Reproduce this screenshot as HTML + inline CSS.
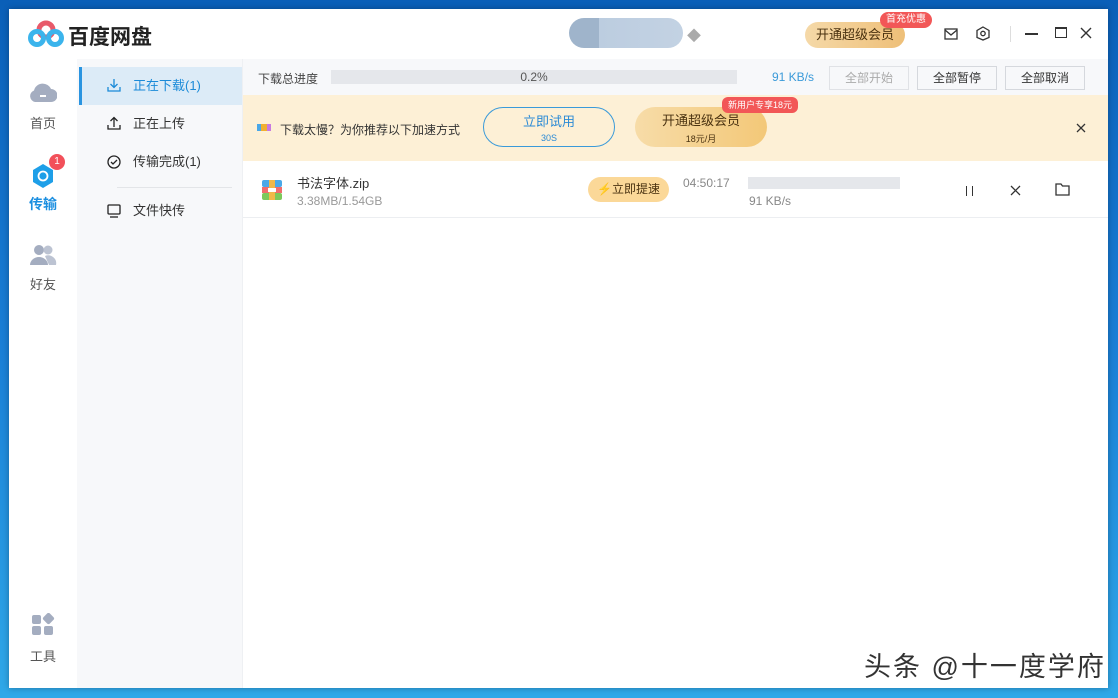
<!DOCTYPE html><html><head><meta charset="utf-8"><style>
*{margin:0;padding:0;box-sizing:border-box}
body{width:1118px;height:698px;overflow:hidden;font-family:"Liberation Sans","Noto Sans CJK SC",sans-serif;background:linear-gradient(180deg,#0a5fb8 0%,#1a7fd6 50%,#2fa8e8 100%);position:relative;font-size:12px;color:#333}
.win{position:absolute;left:9px;top:9px;width:1099px;height:679px;background:#fff;box-shadow:0 0 6px rgba(0,0,0,.3)}
.abs{position:absolute}
.side{left:0;top:50px;width:68px;height:629px;background:#fff}
.list{left:68px;top:50px;width:166px;height:629px;background:#f7f8fa;border-right:1px solid #eef0f3}
.main{left:234px;top:50px;width:865px;height:629px;background:#fff}
.nav{position:absolute;left:0;width:68px;text-align:center;font-size:13px;color:#555}
.li{position:absolute;left:2px;width:163px;height:38px;line-height:38px;padding-left:54px;font-size:13px;color:#333}
.btn{position:absolute;top:7px;height:24px;border:1px solid #d5d8dd;background:#f7f8fa;font-size:12px;text-align:center;line-height:22px;color:#333;width:80px}
.tag{position:absolute;background:#f25757;color:#fff;font-size:10px;border-radius:8px;height:16px;line-height:16px;padding:0 6px}
</style></head><body>
<div class="win">
 <svg class="abs" style="left:19px;top:11px" width="36" height="28" viewBox="0 0 36 28"><circle cx="18" cy="10" r="7" fill="none" stroke="#e85a6a" stroke-width="5"/><circle cx="9" cy="18" r="6.5" fill="none" stroke="#3bb4ec" stroke-width="5"/><circle cx="27" cy="18" r="6.5" fill="none" stroke="#3bb4ec" stroke-width="5"/></svg>
 <div class="abs" style="left:59px;top:12px;font-size:21px;font-weight:bold;color:#222">百度网盘</div>
 <div class="abs" style="left:560px;top:9px;width:114px;height:30px;border-radius:15px;background:linear-gradient(90deg,#9fb4cb 0,#9fb4cb 30px,#bccde0 30px,#c3d2e3 100%)"></div>
 <div class="abs" style="left:678px;top:17px;color:#aaa;font-size:14px">◆</div>
 <div class="abs" style="left:796px;top:13px;width:100px;height:26px;border-radius:13px;background:linear-gradient(90deg,#f5d9a8,#eebf78);text-align:center;line-height:26px;font-size:13px;color:#4a3210">开通超级会员</div>
 <div class="tag" style="left:871px;top:3px">首充优惠</div>
 <svg class="abs" style="left:935px;top:19px" width="14" height="12"><rect x="1" y="1" width="12" height="10" fill="none" stroke="#333" stroke-width="1.3"/><path d="M1 2l6 5 6-5" fill="none" stroke="#333" stroke-width="1.3"/></svg>
 <svg class="abs" style="left:967px;top:17px" width="14" height="15"><path d="M7 1l6 3.5v7L7 14 1 11.5v-7z" fill="none" stroke="#333" stroke-width="1.3"/><circle cx="7" cy="7.5" r="2.2" fill="none" stroke="#333" stroke-width="1.3"/></svg>
 <div class="abs" style="left:1001px;top:17px;width:1px;height:16px;background:#ddd"></div>
 <div class="abs" style="left:1016px;top:24px;width:13px;height:1.5px;background:#333"></div>
 <div class="abs" style="left:1046px;top:18px;width:12px;height:11px;border:1.5px solid #333;border-top-width:2.5px"></div>
 <svg class="abs" style="left:1071px;top:18px" width="12" height="12"><path d="M1 1l10 10M11 1L1 11" stroke="#333" stroke-width="1.4"/></svg>

 <div class="abs side">
  <div class="nav" style="top:22px"><svg width="28" height="22" viewBox="0 0 28 22"><path d="M6 21a6 6 0 0 1-1-11.5A9 9 0 0 1 22 8a6.5 6.5 0 0 1 0 13z" fill="#a4adc0"/><rect x="11" y="14" width="6" height="2" fill="#fff"/></svg><div style="margin-top:7px">首页</div></div>
  <div class="nav" style="top:103px"><svg width="28" height="28" viewBox="0 0 28 28"><path d="M14 2l10 6v12l-10 6-10-6V8z" fill="#1e9fe8"/><circle cx="14" cy="14" r="4.5" fill="none" stroke="#fff" stroke-width="1.8"/></svg><div style="margin-top:1px;color:#1c8fe0;font-weight:bold;font-size:14px">传输</div></div>
  <div class="abs" style="left:40px;top:95px;width:16px;height:16px;border-radius:8px;background:#f2505a;color:#fff;font-size:10px;text-align:center;line-height:16px">1</div>
  <div class="nav" style="top:184px"><svg width="28" height="24" viewBox="0 0 28 24"><circle cx="10" cy="7" r="5" fill="#a4adc0"/><path d="M1 22a9 8 0 0 1 18 0z" fill="#a4adc0"/><circle cx="19" cy="7" r="4.5" fill="#bcc3d2"/><path d="M16 13a8 8 0 0 1 11 9h-7z" fill="#bcc3d2"/></svg><div style="margin-top:4px">好友</div></div>
  <div class="nav" style="top:554px"><svg width="24" height="24" viewBox="0 0 24 24"><rect x="1" y="2" width="9" height="9" rx="2" fill="#a4adc0"/><rect x="13" y="1" width="9" height="9" rx="2" fill="#a4adc0" transform="rotate(45 17.5 5.5)"/><rect x="1" y="13" width="9" height="9" rx="2" fill="#a4adc0"/><rect x="13" y="13" width="9" height="9" rx="2" fill="#a4adc0"/></svg><div style="margin-top:6px">工具</div></div>
 </div>

 <div class="abs list">
  <div class="li" style="top:8px;background:#dcebf7;color:#1a8ad8;border-left:3px solid #2a94e0;padding-left:51px">正在下载(1)</div>
  <svg class="abs" style="left:30px;top:19px" width="14" height="14"><path d="M7 1v8M3.5 6L7 9.5 10.5 6M1 9v4h12V9" fill="none" stroke="#1a8ad8" stroke-width="1.3"/></svg>
  <div class="li" style="top:46px">正在上传</div>
  <svg class="abs" style="left:30px;top:57px" width="14" height="14"><path d="M7 11V2M3.5 5L7 1.5 10.5 5M1 9v4h12V9" fill="none" stroke="#222" stroke-width="1.3"/></svg>
  <div class="li" style="top:84px">传输完成(1)</div>
  <svg class="abs" style="left:30px;top:96px" width="14" height="14"><circle cx="7" cy="7" r="6" fill="none" stroke="#222" stroke-width="1.3"/><path d="M4 7l2 2 4-4" fill="none" stroke="#222" stroke-width="1.3"/></svg>
  <div class="abs" style="left:40px;top:128px;width:115px;height:1px;background:#e3e5e8"></div>
  <div class="li" style="top:133px">文件快传</div>
  <svg class="abs" style="left:30px;top:145px" width="14" height="14"><rect x="1" y="1" width="12" height="9" rx="1" fill="none" stroke="#222" stroke-width="1.3"/><path d="M3 13h8" stroke="#222" stroke-width="1.3"/></svg>
 </div>

 <div class="abs main">
  <div class="abs" style="left:0;top:0;width:865px;height:36px;background:#f7f8fa"></div>
  <div class="abs" style="left:15px;top:11px;font-size:12px;color:#444">下载总进度</div>
  <div class="abs" style="left:88px;top:11px;width:406px;height:14px;background:#e5e7eb;text-align:center;font-size:12px;line-height:14px;color:#555">0.2%</div>
  <div class="abs" style="left:529px;top:11px;color:#3a9ad9;font-size:12px">91 KB/s</div>
  <div class="btn" style="left:586px;color:#aaa;border-color:#e0e2e6">全部开始</div>
  <div class="btn" style="left:674px">全部暂停</div>
  <div class="btn" style="left:762px">全部取消</div>
  <div class="abs" style="left:0;top:36px;width:865px;height:66px;background:#fdf0d6"></div>
  <div class="abs" style="left:14px;top:65px;width:14px;height:7px;background:linear-gradient(90deg,#4aa8e8 0 30%,#f0b030 30% 70%,#c87ae0 70%)"></div>
  <div class="abs" style="left:37px;top:62px;font-size:12px;color:#333">下载太慢？为你推荐以下加速方式</div>
  <div class="abs" style="left:240px;top:48px;width:132px;height:40px;border:1.3px solid #3a9ad9;border-radius:20px;text-align:center;color:#2a8ad5"><div style="font-size:13px;margin-top:7px;line-height:14px">立即试用</div><div style="font-size:9px;margin-top:4px">30S</div></div>
  <div class="abs" style="left:392px;top:48px;width:132px;height:40px;border-radius:20px;background:linear-gradient(90deg,#f7dca8,#f3c878);text-align:center;color:#4a3210"><div style="font-size:13px;margin-top:7px;line-height:14px">开通超级会员</div><div style="font-size:9px;margin-top:4px">18元/月</div></div>
  <div class="tag" style="left:479px;top:38px;border-radius:6px;font-size:9px">新用户专享18元</div>
  <svg class="abs" style="left:833px;top:64px" width="10" height="10"><path d="M1 1l8 8M9 1L1 9" stroke="#333" stroke-width="1.3"/></svg>
  <svg class="abs" style="left:19px;top:121px" width="20" height="20"><rect y="0" width="20" height="7" rx="2" fill="#4aa8e8"/><rect y="7" width="20" height="6" fill="#f06c6c"/><rect y="13" width="20" height="7" rx="2" fill="#7cc85a"/><rect x="7" y="0" width="6" height="20" fill="#f0b84a"/><rect x="6" y="8" width="8" height="4" fill="#fff"/></svg>
  <div class="abs" style="left:54px;top:114px;font-size:13px;color:#333">书法字体.zip</div>
  <div class="abs" style="left:54px;top:135px;font-size:12px;color:#999">3.38MB/1.54GB</div>
  <div class="abs" style="left:345px;top:118px;width:81px;height:25px;border-radius:13px;background:#fbd898;font-size:12px;line-height:25px;text-align:center;color:#4a3210"><span style="color:#f0a020">⚡</span>立即提速</div>
  <div class="abs" style="left:440px;top:117px;font-size:12px;color:#888">04:50:17</div>
  <div class="abs" style="left:505px;top:118px;width:152px;height:12px;background:#e5e7eb"></div>
  <div class="abs" style="left:506px;top:135px;font-size:12px;color:#888">91 KB/s</div>
  <div class="abs" style="left:723px;top:127px;width:1.3px;height:10px;background:#333"></div>
  <div class="abs" style="left:729px;top:127px;width:1.3px;height:10px;background:#333"></div>
  <svg class="abs" style="left:767px;top:126px" width="11" height="11"><path d="M1 1l9 9M10 1L1 10" stroke="#333" stroke-width="1.3"/></svg>
  <svg class="abs" style="left:812px;top:124px" width="15" height="13"><path d="M1 1h5l1.5 2H14v9H1z" fill="none" stroke="#333" stroke-width="1.3"/></svg>
  <div class="abs" style="left:0;top:158px;width:865px;height:1px;background:#eceef1"></div>
 </div>
</div>
<div class="abs" style="left:864px;top:645px;font-size:27px;letter-spacing:2px;color:#333;text-shadow:0 0 3px #fff">头条 @十一度学府</div>
</body></html>
